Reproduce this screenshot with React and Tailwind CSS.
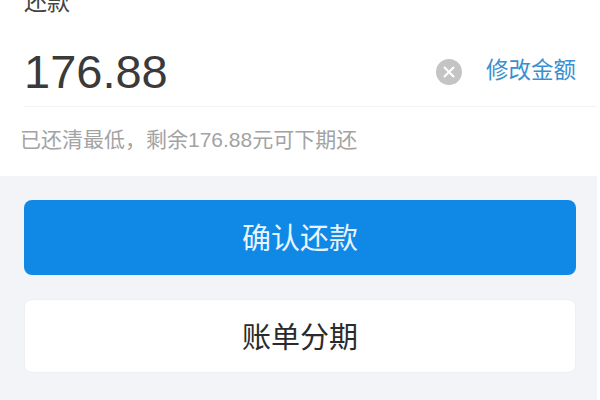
const cjk = "font-['Liberation_Sans','Noto_Sans_CJK_SC',sans-serif]";

export default function App() {
  return (
    <div className={`flex h-[400px] w-[600px] overflow-hidden bg-white ${cjk}`}>
      <div className="flex w-[597px] flex-col bg-[#f3f4f8]">
        <section className="h-[176px] bg-white pl-6">
          <p className="-mt-[12px] h-[31px] text-[23px] leading-[29px] text-[#444]">还款</p>
          <div className="flex h-[88px] items-center border-b border-[#f4f4f4] pr-[21px] pt-[18px]">
            <span className="flex-1 text-[47px] leading-none text-[#3a3a3a]">176.88</span>
            <span className="flex h-[26px] w-[26px] items-center justify-center rounded-full bg-[#c4c4c4]">
              <svg width="14" height="14" viewBox="0 0 14 14" fill="none" stroke="#fff" strokeWidth="2" strokeLinecap="round">
                <path d="M2.5 2.5l9 9M11.5 2.5l-9 9" />
              </svg>
            </span>
            <button className="ml-[24px] text-[22.5px] leading-none text-[#3a8fd0]">修改金额</button>
          </div>
          <p className="-ml-[4px] mt-[19px] text-[21px] leading-[28px] text-[#a3a3a3]">已还清最低，剩余176.88元可下期还</p>
        </section>
        <div className="flex flex-col gap-6 pl-6 pr-[21px] pt-6">
          <button className="h-[75px] rounded-lg bg-[#1088e6] pt-[5px] text-[29px] text-[#e6f4ff]">确认还款</button>
          <button className="h-[74px] rounded-lg border border-[#f0f0f4] bg-white pt-[5px] text-[29px] text-[#2b2b2b]">账单分期</button>
        </div>
      </div>
    </div>
  );
}
